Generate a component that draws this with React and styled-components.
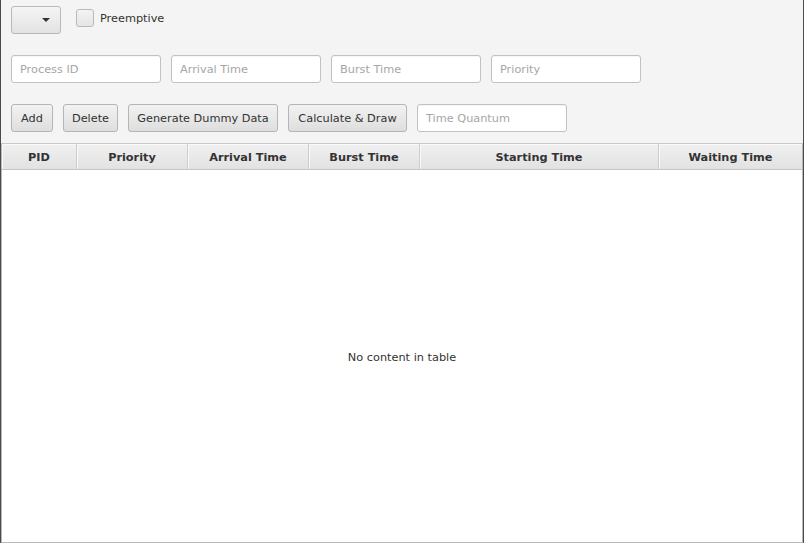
import React from 'react';
import styled, { createGlobalStyle } from 'styled-components';

const GlobalStyle = createGlobalStyle`
  html, body {
    margin: 0;
    padding: 0;
    background: #f4f4f4;
  }
  * { box-sizing: border-box; }
`;

const font = '"DejaVu Sans", "Liberation Sans", sans-serif';

const Window = styled.div`
  width: 804px;
  height: 543px;
  background: #f4f4f4;
  border-left: 1px solid #4b4b4b;
  border-right: 1px solid #4b4b4b;
  display: flex;
  flex-direction: column;
  font-family: ${font};
  font-size: 11.3px;
  color: #333;
  overflow: hidden;
`;

const Controls = styled.div`
  display: flex;
  flex-direction: column;
  gap: 21px;
  padding: 6px 10px 0 10px;
`;

const Row = styled.div`
  display: flex;
  align-items: center;
  gap: 10px;
  height: 28px;
`;

const ComboBox = styled.div`
  width: 50px;
  height: 28px;
  border: 1px solid #b9b9b9;
  border-radius: 3px;
  background: linear-gradient(to bottom, #f5f5f5, #e2e2e2);
  display: flex;
  align-items: center;
  justify-content: flex-end;
  padding-right: 10px;
`;

const Arrow = styled.span`
  width: 0;
  height: 0;
  border-left: 4px solid transparent;
  border-right: 4px solid transparent;
  border-top: 4px solid #333;
`;

const CheckLabel = styled.label`
  display: flex;
  align-items: center;
  gap: 6px;
  margin-left: 5px;
  margin-top: -4px;
  color: #333;
`;

const CheckBox = styled.span`
  width: 18px;
  height: 18px;
  border: 1px solid #b9b9b9;
  border-radius: 3px;
  background: linear-gradient(to bottom, #f3f3f3, #e4e4e4);
`;

const TextField = styled.input`
  width: 150px;
  height: 28px;
  border: 1px solid #c2c2c2;
  border-radius: 3px;
  background: #fff;
  padding: 0 8px;
  font-family: ${font};
  font-size: 11.3px;
  color: #333;
  outline: none;
  box-shadow: inset 0 1px 1px rgba(0, 0, 0, 0.04);

  &::placeholder {
    color: #a6a6a6;
  }
`;

const Button = styled.button`
  width: ${({ w }) => w}px;
  height: 28px;
  padding: 0;
  border: 1px solid #b5b5b5;
  border-radius: 3px;
  background: linear-gradient(to bottom, #f2f2f2, #dedede);
  font-family: ${font};
  font-size: 11.3px;
  color: #333;
`;

const Table = styled.div`
  margin-top: 11px;
  flex: 1;
  display: flex;
  flex-direction: column;
  border: 1px solid #b8b8b8;
  border-top-color: #c9c9c9;
  background: #fff;
`;

const Header = styled.div`
  display: flex;
  height: 26px;
  background: linear-gradient(to bottom, #f0f0f0, #e2e2e2);
  border-bottom: 1px solid #c6c6c6;
`;

const HeadCell = styled.div`
  width: ${({ w }) => w}px;
  flex: ${({ grow }) => (grow ? 1 : 'none')};
  display: flex;
  align-items: center;
  justify-content: center;
  padding-top: 1px;
  font-weight: bold;
  color: #333;
  border-right: ${({ last }) => (last ? 'none' : '1px solid #cdcdcd')};
  box-shadow: inset 1px 1px 0 #fafafa;
`;

const Body = styled.div`
  flex: 1;
  display: flex;
  align-items: center;
  justify-content: center;
  color: #333;
  padding-top: 2px;
`;

const columns = [
  { name: 'PID', w: 75 },
  { name: 'Priority', w: 111 },
  { name: 'Arrival Time', w: 121 },
  { name: 'Burst Time', w: 111 },
  { name: 'Starting Time', w: 239 },
  { name: 'Waiting Time', w: 142, last: true },
];

export default function App() {
  return (
    <>
      <GlobalStyle />
      <Window>
        <Controls>
          <Row>
            <ComboBox>
              <Arrow />
            </ComboBox>
            <CheckLabel>
              <CheckBox />
              Preemptive
            </CheckLabel>
          </Row>
          <Row>
            <TextField placeholder="Process ID" />
            <TextField placeholder="Arrival Time" />
            <TextField placeholder="Burst Time" />
            <TextField placeholder="Priority" />
          </Row>
          <Row>
            <Button w={42}>Add</Button>
            <Button w={55}>Delete</Button>
            <Button w={150}>Generate Dummy Data</Button>
            <Button w={119}>Calculate &amp; Draw</Button>
            <TextField placeholder="Time Quantum" />
          </Row>
        </Controls>
        <Table>
          <Header>
            {columns.map((c) => (
              <HeadCell key={c.name} w={c.w} last={c.last} grow={c.last}>
                {c.name}
              </HeadCell>
            ))}
          </Header>
          <Body>No content in table</Body>
        </Table>
      </Window>
    </>
  );
}
